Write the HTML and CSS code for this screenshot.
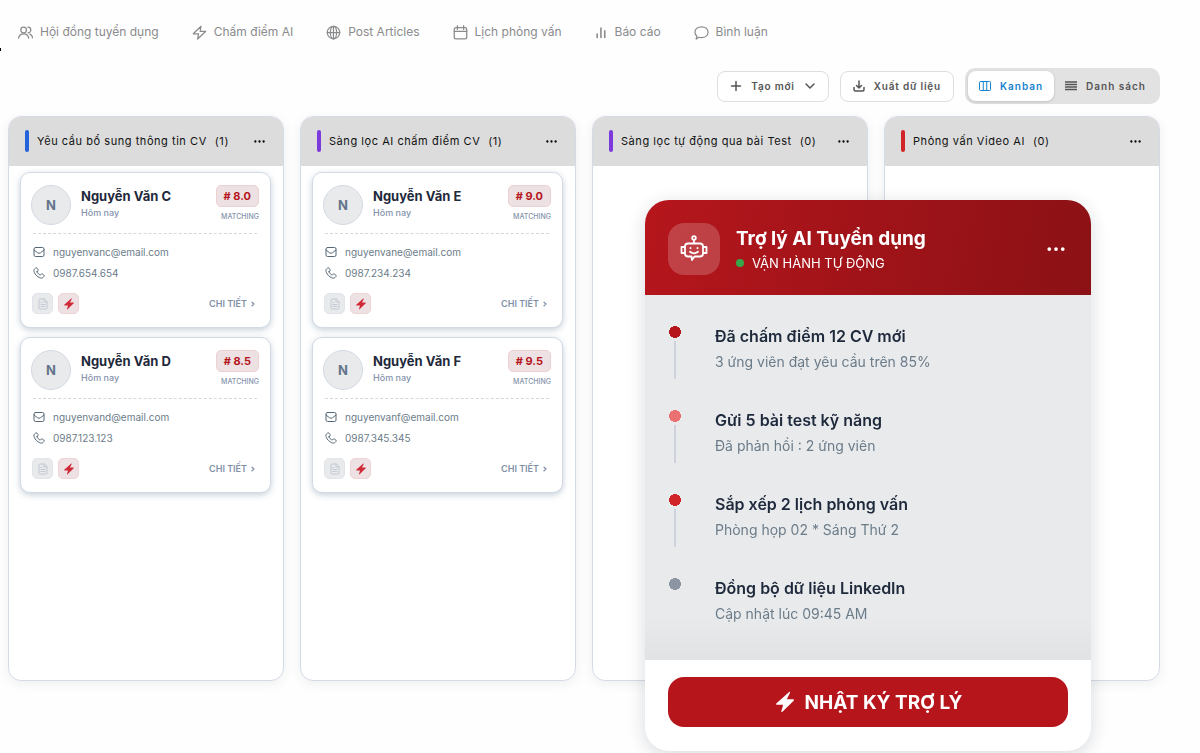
FILE: index.html
```html
<!DOCTYPE html>
<html lang="vi">
<head>
    <meta charset="UTF-8">
    <meta name="viewport" content="width=device-width, initial-scale=1.0">
    <title>Tuyển dụng</title>
    <link rel="stylesheet" href="styles.css">
</head>
<body>
    <!-- Shared icons -->
    <svg class="sprite" aria-hidden="true">
        <symbol id="i-mail" viewBox="0 0 24 24"><rect x="2" y="3" width="20" height="18" rx="3"/><path d="M2 8l7 5.500q3 2 6 0L22 8"/></symbol>
        <symbol id="i-phone" viewBox="0 0 24 24"><path d="M8 9.500l2-2c.6-.6.7-1.500.2-2.200L8 2.300c-.6-.8-1.700-1-2.500-.4L3 4C1.500 5.500 1.500 8 2.500 10.500c2 4.800 6 9 11 11 2.500 1 5 1 6.500-.5l2-2.300c.7-.8.500-1.900-.3-2.500l-3-2.200c-.7-.5-1.600-.4-2.200.2l-2 2C11.500 15 9 12.500 8 9.500z"/></symbol>
        <symbol id="i-file" viewBox="0 0 24 24"><path d="M14 2H6a2 2 0 0 0-2 2v16a2 2 0 0 0 2 2h12a2 2 0 0 0 2-2V8z"/><path d="M14 2v6h6M8 9h2M8 13h8M8 17h8"/></symbol>
        <symbol id="i-bolt" viewBox="0 0 24 24"><path d="M16.500 1L2.500 13.500q-1 1.500.8 1.500H10L8 22q0 1.500 1.200.6L21.500 10.500q1-1.500-.8-1.500H14l3.500-7q.2-1.800-1-1z"/></symbol>
        <symbol id="i-chevron" viewBox="0 0 24 24"><path d="M8 5l8 7-8 7"/></symbol>
        <symbol id="i-dots" viewBox="0 0 24 24"><circle cx="3" cy="12" r="2.500"/><circle cx="12" cy="12" r="2.500"/><circle cx="21" cy="12" r="2.500"/></symbol>
    </svg>

    <nav class="nav">
        <a href="#"><svg class="icon" viewBox="0 0 24 24"><circle cx="9" cy="8" r="4.500"/><path d="M1 21c.5-4.500 4-7 8-7s7.500 2.500 8 7M16 3.500a4.500 4.500 0 0 1 0 9M19 14.500c2.500 1 4 3 4.300 6"/></svg>Hội đồng tuyển dụng</a>
        <a href="#"><svg class="icon" viewBox="0 0 24 24"><path d="M14.500 2L2 14h8.500L9 22.500 22 10h-9z"/></svg>Chấm điểm AI</a>
        <a href="#"><svg class="icon" viewBox="0 0 24 24"><circle cx="12" cy="12" r="10"/><ellipse cx="12" cy="12" rx="5" ry="10"/><path d="M2 12h20M12 2v20"/></svg>Post Articles</a>
        <a href="#"><svg class="icon" viewBox="0 0 24 24"><rect x="2" y="4" width="20" height="18" rx="3"/><path d="M2 10h20M7 1v6M17 1v6"/></svg>Lịch phỏng vấn</a>
        <a href="#"><svg class="icon bars" viewBox="0 0 24 24"><path d="M4 15v6M11 4v17M18 9v12"/></svg>Báo cáo</a>
        <a href="#"><svg class="icon" viewBox="0 0 24 24"><path d="M12 3c6 0 10.500 3.500 10.500 8.500S18 20 12 20c-1.500 0-3 0-4-.5L3.500 22.500l1-5C2.500 16 1.500 14 1.500 11.500 1.500 6.500 6 3 12 3z"/></svg>Bình luận</a>
    </nav>
    <div class="edge-mark"></div>

    <div class="toolbar">
        <button class="btn"><svg class="icon" viewBox="0 0 24 24"><path d="M12 3v18M3 12h18"/></svg>Tạo mới<svg class="icon" viewBox="0 0 24 24"><path d="M4 8l8 8 8-8"/></svg></button>
        <button class="btn"><svg class="icon" viewBox="0 0 24 24"><path d="M12 2v14M7 11l5 5 5-5M2 15v4q0 3 3 3h14q3 0 3-3v-4"/></svg>Xuất dữ liệu</button>
        <div class="switch">
            <button class="active"><svg class="icon" viewBox="0 0 24 24"><rect x="1" y="3" width="22" height="18" rx="2"/><path d="M8.500 3v18M15.500 3v18"/></svg>Kanban</button>
            <button><svg class="icon list" viewBox="0 0 24 24"><path d="M0 4h24M0 9h24M0 14h24M0 19h24"/></svg>Danh sách</button>
        </div>
    </div>

    <main class="board">
        <section class="column blue">
            <header><h2>Yêu cầu bổ sung thông tin CV <span>(1)</span></h2><button aria-label="Tùy chọn"><svg><use href="#i-dots"/></svg></button></header>
            <div class="cards">
                <article class="card">
                    <div class="card-top">
                        <div class="avatar">N</div>
                        <div class="who"><h3>Nguyễn Văn C</h3><p>Hôm nay</p></div>
                        <div class="score"><b># 8.0</b><small>MATCHING</small></div>
                    </div>
                    <div class="contact">
                        <p><svg class="icon"><use href="#i-mail"/></svg>nguyenvanc@email.com</p>
                        <p><svg class="icon"><use href="#i-phone"/></svg>0987.654.654</p>
                    </div>
                    <div class="card-foot">
                        <button class="tool" aria-label="Xem CV"><svg class="icon"><use href="#i-file"/></svg></button>
                        <button class="tool red" aria-label="Chấm điểm"><svg><use href="#i-bolt"/></svg></button>
                        <a href="#">CHI TIẾT<svg class="icon"><use href="#i-chevron"/></svg></a>
                    </div>
                </article>
                <article class="card">
                    <div class="card-top">
                        <div class="avatar">N</div>
                        <div class="who"><h3>Nguyễn Văn D</h3><p>Hôm nay</p></div>
                        <div class="score"><b># 8.5</b><small>MATCHING</small></div>
                    </div>
                    <div class="contact">
                        <p><svg class="icon"><use href="#i-mail"/></svg>nguyenvand@email.com</p>
                        <p><svg class="icon"><use href="#i-phone"/></svg>0987.123.123</p>
                    </div>
                    <div class="card-foot">
                        <button class="tool" aria-label="Xem CV"><svg class="icon"><use href="#i-file"/></svg></button>
                        <button class="tool red" aria-label="Chấm điểm"><svg><use href="#i-bolt"/></svg></button>
                        <a href="#">CHI TIẾT<svg class="icon"><use href="#i-chevron"/></svg></a>
                    </div>
                </article>
            </div>
        </section>

        <section class="column purple">
            <header><h2>Sàng lọc AI chấm điểm CV <span>(1)</span></h2><button aria-label="Tùy chọn"><svg><use href="#i-dots"/></svg></button></header>
            <div class="cards">
                <article class="card">
                    <div class="card-top">
                        <div class="avatar">N</div>
                        <div class="who"><h3>Nguyễn Văn E</h3><p>Hôm nay</p></div>
                        <div class="score"><b># 9.0</b><small>MATCHING</small></div>
                    </div>
                    <div class="contact">
                        <p><svg class="icon"><use href="#i-mail"/></svg>nguyenvane@email.com</p>
                        <p><svg class="icon"><use href="#i-phone"/></svg>0987.234.234</p>
                    </div>
                    <div class="card-foot">
                        <button class="tool" aria-label="Xem CV"><svg class="icon"><use href="#i-file"/></svg></button>
                        <button class="tool red" aria-label="Chấm điểm"><svg><use href="#i-bolt"/></svg></button>
                        <a href="#">CHI TIẾT<svg class="icon"><use href="#i-chevron"/></svg></a>
                    </div>
                </article>
                <article class="card">
                    <div class="card-top">
                        <div class="avatar">N</div>
                        <div class="who"><h3>Nguyễn Văn F</h3><p>Hôm nay</p></div>
                        <div class="score"><b># 9.5</b><small>MATCHING</small></div>
                    </div>
                    <div class="contact">
                        <p><svg class="icon"><use href="#i-mail"/></svg>nguyenvanf@email.com</p>
                        <p><svg class="icon"><use href="#i-phone"/></svg>0987.345.345</p>
                    </div>
                    <div class="card-foot">
                        <button class="tool" aria-label="Xem CV"><svg class="icon"><use href="#i-file"/></svg></button>
                        <button class="tool red" aria-label="Chấm điểm"><svg><use href="#i-bolt"/></svg></button>
                        <a href="#">CHI TIẾT<svg class="icon"><use href="#i-chevron"/></svg></a>
                    </div>
                </article>
            </div>
        </section>

        <section class="column purple">
            <header><h2>Sàng lọc tự động qua bài Test <span>(0)</span></h2><button aria-label="Tùy chọn"><svg><use href="#i-dots"/></svg></button></header>
        </section>

        <section class="column red">
            <header><h2>Phỏng vấn Video AI <span>(0)</span></h2><button aria-label="Tùy chọn"><svg><use href="#i-dots"/></svg></button></header>
        </section>
    </main>

    <!-- Floating assistant -->
    <aside class="assistant">
        <header>
            <div class="bot">
                <svg viewBox="0 0 28 28"><circle cx="14" cy="3" r="1.800"/><path d="M14 5v3M8 8.500h12a3 3 0 0 1 3 3v7a3 3 0 0 1-3 3h-5.500L12 25l-.5-3.500H8a3 3 0 0 1-3-3v-7a3 3 0 0 1 3-3zM5 12H1.500v6H5M23 12h3.500v6H23M10 16.800q4 3.200 8 0"/><path d="M10.500 13v.2M17.500 13v.2"/></svg>
            </div>
            <div class="assistant-name">
                <h2>Trợ lý AI Tuyển dụng</h2>
                <p>VẬN HÀNH TỰ ĐỘNG</p>
            </div>
            <button aria-label="Tùy chọn"><svg><use href="#i-dots"/></svg></button>
        </header>
        <ul class="timeline">
            <li class="dark"><h3>Đã chấm điểm 12 CV mới</h3><p>3 ứng viên đạt yêu cầu trên 85%</p></li>
            <li class="light"><h3>Gửi 5 bài test kỹ năng</h3><p>Đã phản hồi : 2 ứng viên</p></li>
            <li class="mid"><h3>Sắp xếp 2 lịch phỏng vấn</h3><p>Phòng họp 02 * Sáng Thứ 2</p></li>
            <li class="gray"><h3>Đồng bộ dữ liệu LinkedIn</h3><p>Cập nhật lúc 09:45 AM</p></li>
        </ul>
        <footer>
            <button><svg><use href="#i-bolt"/></svg>NHẬT KÝ TRỢ LÝ</button>
        </footer>
    </aside>
</body>
</html>
```
FILE: styles.css
```css
* {
    box-sizing: border-box;
}

body {
    margin: 0;
    min-height: 100vh;
    display: flex;
    flex-direction: column;
    font-family: Inter, "Liberation Sans", sans-serif;
    background: #fefefe;
    color: #1e293b;
    overflow: hidden;
}

h2, h3, p, ul {
    margin: 0;
    padding: 0;
}

a {
    color: inherit;
    text-decoration: none;
}

button {
    font-family: inherit;
    border: none;
    background: none;
    padding: 0;
    cursor: pointer;
}

svg {
    flex: none;
    fill: currentColor;
}

.sprite {
    display: none;
}

.icon {
    fill: none;
    stroke: currentColor;
    stroke-width: 2;
    stroke-linecap: round;
    stroke-linejoin: round;
}

/* Top navigation */
.nav {
    display: flex;
    gap: 33px;
    padding: 24px 18px 0;
    font-size: 12px;
    line-height: 16px;
    color: #8a8b8d;
    white-space: nowrap;
}

.nav a {
    display: flex;
    align-items: center;
    gap: 7px;
}

.nav .icon {
    width: 15px;
    height: 15px;
}

.nav .bars {
    width: 13px;
    stroke-width: 3;
}

.edge-mark {
    width: 1px;
    height: 3px;
    margin-top: 8px;
    background: #000;
}

/* Toolbar */
.toolbar {
    display: flex;
    justify-content: flex-end;
    align-items: center;
    gap: 11px;
    margin: 17px 40px 12px 8px;
}

.toolbar button {
    display: flex;
    align-items: center;
    font-size: 10px;
    font-weight: 600;
    letter-spacing: 0.08em;
    color: #555;
    white-space: nowrap;
}

.toolbar .icon {
    width: 12px;
    height: 12px;
}

.toolbar .btn {
    height: 31px;
    gap: 9px;
    padding: 0 12px 1px;
    border: 1px solid #dedede;
    border-radius: 8px;
    background: #fff;
}

.toolbar .btn .icon {
    stroke-width: 3;
}

.switch {
    display: flex;
    padding: 3px;
    border-radius: 10px;
    background: #e2e2e2;
}

.toolbar .switch button {
    height: 30px;
    gap: 9px;
    padding: 0 11px 1px;
    border-radius: 8px;
    letter-spacing: 0.1em;
}

.toolbar .switch .active {
    color: #1683d0;
    background: #fff;
    box-shadow: 0 1px 3px rgba(0, 0, 0, 0.15);
}

.toolbar .list {
    stroke-width: 3;
    stroke-linecap: butt;
}

/* Board */
.board {
    display: grid;
    grid-template-columns: repeat(4, 1fr);
    gap: 16px;
    flex: 1;
    margin: 0 40px 72px 8px;
}

.column {
    border: 1px solid #d5dbe6;
    border-radius: 13px;
    background: #fff;
    box-shadow: 0 3px 12px rgba(30, 41, 59, 0.07);
    overflow: hidden;
}

.column header {
    display: flex;
    align-items: center;
    justify-content: space-between;
    height: 49px;
    padding: 0 18px 1px 16px;
    background: #dcdcdc;
}

.column h2 {
    display: flex;
    align-items: center;
    gap: 8px;
    font-size: 11px;
    font-weight: 400;
    letter-spacing: 0.05em;
    color: #111;
    white-space: nowrap;
}

.column h2::before {
    content: "";
    width: 4px;
    height: 22px;
    border-radius: 2px;
    background: currentColor;
}

.blue h2::before {
    background: #2563dc;
}

.purple h2::before {
    background: #7c3add;
}

.red h2::before {
    background: #d02428;
}

.column header svg {
    display: block;
    width: 11px;
    height: 11px;
}

.cards {
    display: flex;
    flex-direction: column;
    gap: 9px;
    padding: 6px 12px 12px 11px;
}

.card {
    padding: 12px 11px 12px 10px;
    border: 1px solid #d3dae6;
    border-radius: 10px;
    background: #fff;
    box-shadow: 0 2px 6px rgba(71, 99, 130, 0.3);
}

.card-top {
    display: flex;
    gap: 10px;
}

.avatar {
    width: 40px;
    height: 40px;
    border: 1px solid #d3d9e4;
    border-radius: 50%;
    background: #e8eaec;
    color: #64748b;
    font-size: 13px;
    font-weight: 700;
    line-height: 38px;
    text-align: center;
}

.who {
    flex: 1;
    padding-top: 3px;
}

.who h3 {
    font-size: 13px;
    line-height: 16px;
}

.who p {
    padding-top: 3px;
    font-size: 9px;
    font-weight: 500;
    line-height: 12px;
    color: #8492ab;
}

.score {
    display: flex;
    flex-direction: column;
    align-items: flex-end;
    gap: 5px;
}

.score b {
    padding: 0 7px;
    border: 1px solid #efd0d2;
    border-radius: 5px;
    background: #ede1e3;
    color: #b5151b;
    font-size: 11px;
    line-height: 20px;
}

.score small {
    font-size: 7px;
    font-weight: 500;
    line-height: 9px;
    color: #8492ab;
}

.contact {
    display: flex;
    flex-direction: column;
    gap: 7px;
    margin: 8px 2px 0;
    padding-top: 11px;
    border-top: 1px dashed #d3d8de;
    color: #6b7c89;
    font-size: 10px;
    line-height: 14px;
}

.contact p {
    display: flex;
    align-items: center;
    gap: 8px;
}

.contact .icon {
    width: 12px;
    height: 12px;
    color: #566875;
}

.card-foot {
    display: flex;
    align-items: center;
    gap: 5px;
    padding: 13px 3px 1px 1px;
}

.tool {
    display: flex;
    align-items: center;
    justify-content: center;
    width: 21px;
    height: 21px;
    border: 1px solid #e1e4e8;
    border-radius: 5px;
    background: #e8eaec;
    color: #c3cad4;
}

.tool.red {
    border-color: #f0d3d5;
    background: #ede1e3;
    color: #d02a38;
}

.tool svg {
    width: 12px;
    height: 12px;
}

.card-foot a {
    display: flex;
    align-items: center;
    gap: 3px;
    margin-left: auto;
    font-size: 9px;
    font-weight: 600;
    color: #8190a8;
}

.card-foot a .icon {
    width: 6px;
    height: 6px;
    stroke-width: 5;
}

/* Floating assistant */
.assistant {
    position: fixed;
    right: 109px;
    bottom: 2px;
    width: 446px;
    border-radius: 24px;
    background: #fff;
    box-shadow: 0 4px 18px rgba(15, 30, 50, 0.16);
    overflow: hidden;
}

.assistant header {
    display: flex;
    align-items: center;
    padding: 23px 26px 20px 23px;
    background: linear-gradient(100deg, #b5161c, #8b1115);
    color: #fff;
}

.bot {
    display: flex;
    align-items: center;
    justify-content: center;
    width: 52px;
    height: 52px;
    border-radius: 16px;
    background: rgba(255, 255, 255, 0.19);
}

.bot svg {
    width: 28px;
    height: 28px;
    fill: none;
    stroke: #fff;
    stroke-width: 1.8;
    stroke-linecap: round;
    stroke-linejoin: round;
}

.assistant-name {
    flex: 1;
    padding: 3px 0 0 16px;
}

.assistant-name h2 {
    font-size: 19px;
    line-height: 24px;
}

.assistant-name p {
    display: flex;
    align-items: center;
    gap: 8px;
    font-size: 13px;
    line-height: 24px;
}

.assistant-name p::before {
    content: "";
    width: 8px;
    height: 8px;
    border-radius: 50%;
    background: #37a84a;
}

.assistant header button {
    color: #fff;
}

.assistant header button svg {
    display: block;
    width: 18px;
    height: 18px;
}

.timeline {
    display: flex;
    flex-direction: column;
    gap: 32px;
    padding: 28px 24px 33px;
    list-style: none;
    background: linear-gradient(#e9eaec 88%, #e1e2e4);
}

.timeline li {
    display: grid;
    grid-template-columns: 12px 1fr;
    grid-template-rows: 26px 26px;
    column-gap: 34px;
    align-items: center;
}

/* dot and the line below it */
.timeline li::before {
    content: "";
    grid-row: 1 / 3;
    align-self: start;
    width: 12px;
    height: 53px;
    margin-top: 3px;
    background:
        radial-gradient(circle closest-side, var(--dot) 95%, transparent) 0 0 / 12px 12px no-repeat,
        linear-gradient(#ced2dc, #ced2dc) 5px 15px / 2px 38px no-repeat;
}

.timeline li:last-child::before {
    height: 12px;
}

.timeline .dark {
    --dot: #b5151b;
}

.timeline .light {
    --dot: #ea7072;
}

.timeline .mid {
    --dot: #d02428;
}

.timeline .gray {
    --dot: #8d94a3;
}

.timeline h3 {
    font-size: 16px;
    font-weight: 600;
    line-height: 26px;
    color: #1e293b;
}

.timeline p {
    font-size: 14px;
    line-height: 26px;
    color: #6b7c89;
}

.assistant footer {
    padding: 17px 23px 24px;
}

.assistant footer button {
    display: flex;
    align-items: center;
    justify-content: center;
    gap: 9px;
    width: 100%;
    height: 50px;
    border-radius: 16px;
    background: #b5151b;
    color: #fff;
    font-size: 19px;
    font-weight: 700;
}

.assistant footer svg {
    width: 22px;
    height: 22px;
}
```
